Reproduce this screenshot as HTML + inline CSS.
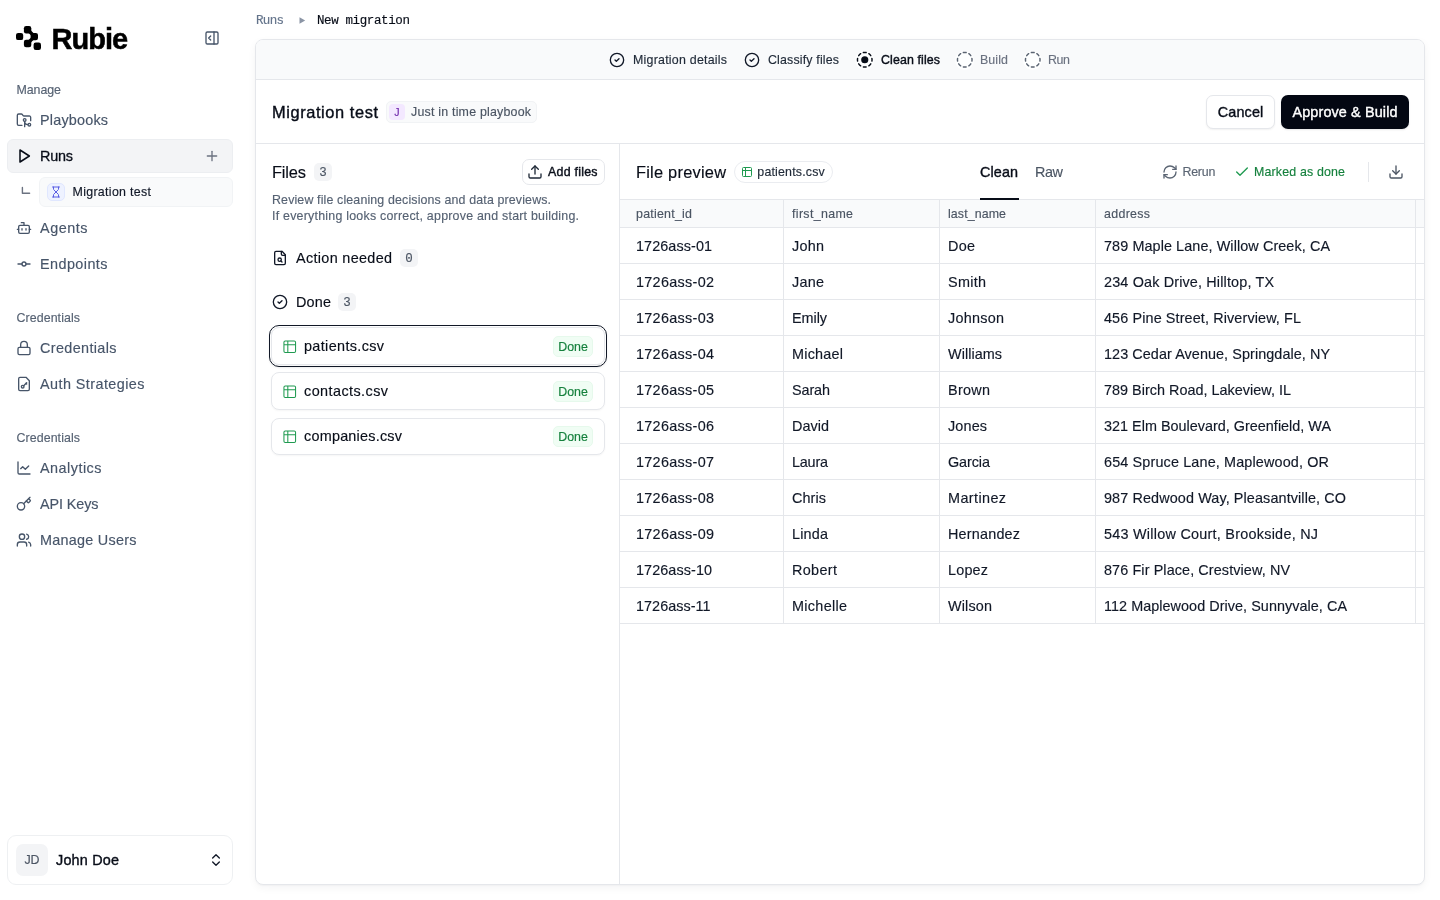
<!DOCTYPE html><html lang="en"><head><meta charset="utf-8"><title>Rubie - New migration</title><style>
*{margin:0;padding:0;box-sizing:border-box}
html,body{width:1440px;height:900px;overflow:hidden;background:#fff}
body{font-family:"Liberation Sans",sans-serif;position:relative}
.t{position:absolute;white-space:nowrap;display:block;font-weight:400;text-decoration:none}
.i{position:absolute;display:block;overflow:visible}
aside,main,section,header,nav,table{position:absolute}
aside,nav,main{will-change:transform}
</style></head><body><aside style="left:0;top:0;width:240px;height:900px"><svg class="i" style="left:14px;top:24px" width="30" height="28" viewBox="14 24 30 28" fill="#000">
<rect x="23.9" y="26" width="7.4" height="7.4" rx="2.2"/><rect x="16" y="32.9" width="7.2" height="7.2" rx="2.2"/>
<rect x="30.6" y="32.9" width="7.4" height="7.4" rx="2.2"/><rect x="23.9" y="39.8" width="7.4" height="7.4" rx="2.2"/>
<rect x="33.6" y="42.6" width="7.4" height="7.4" rx="2.2"/>
<path d="M29.5 31.5l3 3M29.5 41.5l3-3" stroke="#000" stroke-width="3.4" stroke-linecap="round"/></svg><span class="t" id="t0" style="left:51.5px;top:21px;font-size:29px;line-height:36px;color:#000;font-weight:700;-webkit-text-stroke:0.5px;letter-spacing:-0.991px;">Rubie</span><svg class="i" style="left:204px;top:30px;color:#475569;" width="16" height="16" viewBox="0 0 24 24" fill="none" stroke="currentColor" stroke-width="2" stroke-linecap="round" stroke-linejoin="round"><rect width="18" height="18" x="3" y="3" rx="2"/><path d="M15 3v18"/><path d="m10 15-3-3 3-3"/></svg><span class="t" id="t1" style="left:16.5px;top:80.5px;font-size:12.4px;line-height:19px;color:#566273;-webkit-text-stroke:0.15px;letter-spacing:-0.056px;">Manage</span><div style="position:absolute;left:7px;top:139px;width:226px;height:34px;box-sizing:border-box;background:#f3f4f6;border:1px solid #eceef1;border-radius:6px"></div><div style="position:absolute;left:39px;top:177px;width:194px;height:30px;box-sizing:border-box;background:#f9fafb;border:1px solid #f1f3f5;border-radius:6px"></div><svg class="i" style="left:16px;top:112px;color:#475569;" width="16" height="16" viewBox="0 0 24 24" fill="none" stroke="currentColor" stroke-width="2" stroke-linecap="round" stroke-linejoin="round"><path d="M9 20H4a2 2 0 0 1-2-2V5a2 2 0 0 1 2-2h3.9a2 2 0 0 1 1.69.9l.81 1.2a2 2 0 0 0 1.67.9H20a2 2 0 0 1 2 2v5"/><circle cx="13" cy="12" r="2"/><path d="M18 19c-2.8 0-5-2.2-5-5v8"/><circle cx="20" cy="19" r="2"/></svg><a class="t" id="t2" style="left:40px;top:109px;font-size:14.4px;line-height:22px;color:#475569;-webkit-text-stroke:0.15px;letter-spacing:0.199px;">Playbooks</a><svg class="i" style="left:16px;top:148px;color:#080d18;" width="16" height="16" viewBox="0 0 24 24" fill="none" stroke="currentColor" stroke-width="2.3" stroke-linecap="round" stroke-linejoin="round"><polygon points="6 3 20 12 6 21 6 3"/></svg><a class="t" id="t3" style="left:40px;top:145px;font-size:14.4px;line-height:22px;color:#080d18;-webkit-text-stroke:0.3px;letter-spacing:-0.203px;">Runs</a><svg class="i" style="left:16px;top:220px;color:#475569;" width="16" height="16" viewBox="0 0 24 24" fill="none" stroke="currentColor" stroke-width="2" stroke-linecap="round" stroke-linejoin="round"><path d="M12 8V4H8"/><rect width="16" height="12" x="4" y="8" rx="2"/><path d="M2 14h2"/><path d="M20 14h2"/><path d="M15 13v2"/><path d="M9 13v2"/></svg><a class="t" id="t4" style="left:40px;top:217px;font-size:14.4px;line-height:22px;color:#475569;-webkit-text-stroke:0.15px;letter-spacing:0.537px;">Agents</a><svg class="i" style="left:16px;top:256px;color:#475569;" width="16" height="16" viewBox="0 0 24 24" fill="none" stroke="currentColor" stroke-width="2" stroke-linecap="round" stroke-linejoin="round"><circle cx="12" cy="12" r="3"/><line x1="3" x2="9" y1="12" y2="12"/><line x1="15" x2="21" y1="12" y2="12"/></svg><a class="t" id="t5" style="left:40px;top:253px;font-size:14.4px;line-height:22px;color:#475569;-webkit-text-stroke:0.15px;letter-spacing:0.436px;">Endpoints</a><svg class="i" style="left:204px;top:148px;color:#6b7280;" width="16" height="16" viewBox="0 0 24 24" fill="none" stroke="currentColor" stroke-width="2" stroke-linecap="round" stroke-linejoin="round"><path d="M5 12h14"/><path d="M12 5v14"/></svg><svg class="i" style="left:20px;top:184px" width="12" height="12" viewBox="20 184 12 12" fill="none" stroke="#6b7280" stroke-width="1.4" stroke-linecap="round" stroke-linejoin="round"><path d="M22.4 187.4v5.9h7.2"/></svg><div style="position:absolute;left:47px;top:183px;width:18px;height:18px;box-sizing:border-box;background:#eef2ff;border:1px solid #e0e7ff;border-radius:5px"></div><svg class="i" style="left:50px;top:186px;color:#5b5fe3;" width="12" height="12" viewBox="0 0 24 24" fill="none" stroke="currentColor" stroke-width="2" stroke-linecap="round" stroke-linejoin="round"><path d="M5 22h14"/><path d="M5 2h14"/><path d="M17 22v-4.172a2 2 0 0 0-.586-1.414L12 12l-4.414 4.414A2 2 0 0 0 7 17.828V22"/><path d="M7 2v4.172a2 2 0 0 0 .586 1.414L12 12l4.414-4.414A2 2 0 0 0 17 6.172V2"/></svg><a class="t" id="t6" style="left:72.5px;top:182.5px;font-size:12.4px;line-height:19px;color:#111827;-webkit-text-stroke:0.15px;letter-spacing:0.317px;">Migration test</a><span class="t" id="t7" style="left:16.5px;top:308.5px;font-size:12.4px;line-height:19px;color:#566273;-webkit-text-stroke:0.15px;letter-spacing:0.081px;">Credentials</span><svg class="i" style="left:16px;top:340px;color:#475569;" width="16" height="16" viewBox="0 0 24 24" fill="none" stroke="currentColor" stroke-width="2" stroke-linecap="round" stroke-linejoin="round"><rect width="18" height="11" x="3" y="11" rx="2" ry="2"/><path d="M7 11V7a5 5 0 0 1 10 0v4"/></svg><a class="t" id="t8" style="left:40px;top:337px;font-size:14.4px;line-height:22px;color:#475569;-webkit-text-stroke:0.15px;letter-spacing:0.370px;">Credentials</a><svg class="i" style="left:16px;top:376px;color:#475569;" width="16" height="16" viewBox="0 0 24 24" fill="none" stroke="currentColor" stroke-width="2" stroke-linecap="round" stroke-linejoin="round"><path d="M15 2H6a2 2 0 0 0-2 2v16a2 2 0 0 0 2 2h12a2 2 0 0 0 2-2V7Z"/><circle cx="10" cy="16" r="2"/><path d="m16 10-4.5 4.5"/><path d="m15 11 1 1"/></svg><a class="t" id="t9" style="left:40px;top:373px;font-size:14.4px;line-height:22px;color:#475569;-webkit-text-stroke:0.15px;letter-spacing:0.435px;">Auth Strategies</a><span class="t" id="t10" style="left:16.5px;top:428.5px;font-size:12.4px;line-height:19px;color:#566273;-webkit-text-stroke:0.15px;letter-spacing:0.081px;">Credentials</span><svg class="i" style="left:16px;top:460px;color:#475569;" width="16" height="16" viewBox="0 0 24 24" fill="none" stroke="currentColor" stroke-width="2" stroke-linecap="round" stroke-linejoin="round"><path d="M3 3v16a2 2 0 0 0 2 2h16"/><path d="m19 9-5 5-4-4-3 3"/></svg><a class="t" id="t11" style="left:40px;top:457px;font-size:14.4px;line-height:22px;color:#475569;-webkit-text-stroke:0.15px;letter-spacing:0.488px;">Analytics</a><svg class="i" style="left:16px;top:496px;color:#475569;" width="16" height="16" viewBox="0 0 24 24" fill="none" stroke="currentColor" stroke-width="2" stroke-linecap="round" stroke-linejoin="round"><path d="m15.5 7.5 2.3 2.3a1 1 0 0 0 1.4 0l2.1-2.1a1 1 0 0 0 0-1.4L19 4"/><path d="m21 2-9.6 9.6"/><circle cx="7.5" cy="15.5" r="5.5"/></svg><a class="t" id="t12" style="left:40px;top:493px;font-size:14.4px;line-height:22px;color:#475569;-webkit-text-stroke:0.15px;letter-spacing:-0.098px;">API Keys</a><svg class="i" style="left:16px;top:532px;color:#475569;" width="16" height="16" viewBox="0 0 24 24" fill="none" stroke="currentColor" stroke-width="2" stroke-linecap="round" stroke-linejoin="round"><path d="M16 21v-2a4 4 0 0 0-4-4H6a4 4 0 0 0-4 4v2"/><circle cx="9" cy="7" r="4"/><path d="M22 21v-2a4 4 0 0 0-3-3.87"/><path d="M16 3.13a4 4 0 0 1 0 7.75"/></svg><a class="t" id="t13" style="left:40px;top:529px;font-size:14.4px;line-height:22px;color:#475569;-webkit-text-stroke:0.15px;letter-spacing:0.264px;">Manage Users</a><div style="position:absolute;left:7px;top:835px;width:226px;height:50px;box-sizing:border-box;background:#fff;border:1px solid #eef0f2;border-radius:9px"></div><div style="position:absolute;left:16px;top:844px;width:32px;height:32px;box-sizing:border-box;background:#f3f4f6;border-radius:7px"></div><span class="t" id="t14" style="left:24.5px;top:850.5px;font-size:12.4px;line-height:19px;color:#4b5563;-webkit-text-stroke:0.15px;letter-spacing:-0.156px;">JD</span><span class="t" id="t15" style="left:56px;top:849px;font-size:14.4px;line-height:22px;color:#080d18;-webkit-text-stroke:0.38px;letter-spacing:0.199px;">John Doe</span><svg class="i" style="left:208px;top:852px;color:#111827;" width="16" height="16" viewBox="0 0 24 24" fill="none" stroke="currentColor" stroke-width="2" stroke-linecap="round" stroke-linejoin="round"><path d="m7 15 5 5 5-5"/><path d="m7 9 5-5 5 5"/></svg></aside><nav style="left:0;top:0;width:1440px;height:39px"><a class="t" id="t16" style="left:256px;top:11.5px;font-size:12.5px;line-height:19px;color:#64748b;-webkit-text-stroke:0.15px;font-family:'Liberation Mono', monospace;letter-spacing:-0.672px;">Runs</a><svg class="i" style="left:298.5px;top:16.7px" width="7" height="7" viewBox="0 0 7 7"><path d="M0.5 0.3L6.2 3.5L0.5 6.7Z" fill="#8b95a5"/></svg><span class="t" id="t17" style="left:317px;top:11.5px;font-size:12.5px;line-height:19px;color:#080d18;-webkit-text-stroke:0.15px;font-family:'Liberation Mono', monospace;letter-spacing:-0.378px;">New migration</span></nav><main style="left:0;top:0"><div style="position:absolute;left:255px;top:39px;width:1170px;height:846px;box-sizing:border-box;background:#fff;border:1px solid #e5e7eb;border-radius:8px;box-shadow:0 3px 8px rgba(15,23,42,.045),0 1px 2px rgba(15,23,42,.04)"></div><div style="position:absolute;left:256px;top:40px;width:1168px;height:39px;box-sizing:border-box;background:#f9fafb;border-radius:7px 7px 0 0"></div><div style="position:absolute;left:256px;top:79px;width:1168px;height:1px;box-sizing:border-box;background:#e5e7eb"></div><svg class="i" style="left:609.4px;top:52px;color:#111827;" width="16" height="16" viewBox="0 0 24 24" fill="none" stroke="currentColor" stroke-width="2" stroke-linecap="round" stroke-linejoin="round"><circle cx="12" cy="12" r="10"/><path d="m9 12 2 2 4-4"/></svg><span class="t" id="t18" style="left:633px;top:50.5px;font-size:12.4px;line-height:19px;color:#1f2937;-webkit-text-stroke:0.15px;letter-spacing:0.235px;">Migration details</span><svg class="i" style="left:744.4px;top:52px;color:#111827;" width="16" height="16" viewBox="0 0 24 24" fill="none" stroke="currentColor" stroke-width="2" stroke-linecap="round" stroke-linejoin="round"><circle cx="12" cy="12" r="10"/><path d="m9 12 2 2 4-4"/></svg><span class="t" id="t19" style="left:768px;top:50.5px;font-size:12.4px;line-height:19px;color:#1f2937;-webkit-text-stroke:0.15px;letter-spacing:0.165px;">Classify files</span><div style="position:absolute;left:855.1px;top:50.5px;width:19px;height:19px;box-sizing:border-box;background:#fff;border-radius:50%;opacity:.85"></div><svg class="i" style="left:855.85px;top:51.25px;color:#080d18;" width="17.5" height="17.5" viewBox="0 0 24 24" fill="none" stroke="currentColor" stroke-width="2" stroke-linecap="round" stroke-linejoin="round"><path d="M10.1 2.18a9.93 9.93 0 0 1 3.8 0"/><path d="M17.6 3.71a9.95 9.95 0 0 1 2.69 2.7"/><path d="M21.82 10.1a9.93 9.93 0 0 1 0 3.8"/><path d="M20.29 17.6a9.95 9.95 0 0 1-2.7 2.69"/><path d="M13.9 21.82a9.94 9.94 0 0 1-3.8 0"/><path d="M6.4 20.29a9.95 9.95 0 0 1-2.69-2.7"/><path d="M2.18 13.9a9.93 9.93 0 0 1 0-3.8"/><path d="M3.71 6.4a9.95 9.95 0 0 1 2.7-2.69"/><circle cx="12" cy="12" r="4.9" fill="currentColor" stroke="none"/></svg><span class="t" id="t20" style="left:881px;top:50.5px;font-size:12.4px;line-height:19px;color:#080d18;-webkit-text-stroke:0.38px;letter-spacing:0.114px;">Clean files</span><div style="position:absolute;left:955.1px;top:50.5px;width:19px;height:19px;box-sizing:border-box;background:#fff;border-radius:50%;opacity:.85"></div><svg class="i" style="left:955.85px;top:51.25px;color:#5b6472;" width="17.5" height="17.5" viewBox="0 0 24 24" fill="none" stroke="currentColor" stroke-width="2" stroke-linecap="round" stroke-linejoin="round"><path d="M10.1 2.18a9.93 9.93 0 0 1 3.8 0"/><path d="M17.6 3.71a9.95 9.95 0 0 1 2.69 2.7"/><path d="M21.82 10.1a9.93 9.93 0 0 1 0 3.8"/><path d="M20.29 17.6a9.95 9.95 0 0 1-2.7 2.69"/><path d="M13.9 21.82a9.94 9.94 0 0 1-3.8 0"/><path d="M6.4 20.29a9.95 9.95 0 0 1-2.69-2.7"/><path d="M2.18 13.9a9.93 9.93 0 0 1 0-3.8"/><path d="M3.71 6.4a9.95 9.95 0 0 1 2.7-2.69"/></svg><span class="t" id="t21" style="left:980px;top:50.5px;font-size:12.4px;line-height:19px;color:#6b7280;-webkit-text-stroke:0.15px;letter-spacing:0.109px;">Build</span><div style="position:absolute;left:1023.1px;top:50.5px;width:19px;height:19px;box-sizing:border-box;background:#fff;border-radius:50%;opacity:.85"></div><svg class="i" style="left:1023.85px;top:51.25px;color:#5b6472;" width="17.5" height="17.5" viewBox="0 0 24 24" fill="none" stroke="currentColor" stroke-width="2" stroke-linecap="round" stroke-linejoin="round"><path d="M10.1 2.18a9.93 9.93 0 0 1 3.8 0"/><path d="M17.6 3.71a9.95 9.95 0 0 1 2.69 2.7"/><path d="M21.82 10.1a9.93 9.93 0 0 1 0 3.8"/><path d="M20.29 17.6a9.95 9.95 0 0 1-2.7 2.69"/><path d="M13.9 21.82a9.94 9.94 0 0 1-3.8 0"/><path d="M6.4 20.29a9.95 9.95 0 0 1-2.69-2.7"/><path d="M2.18 13.9a9.93 9.93 0 0 1 0-3.8"/><path d="M3.71 6.4a9.95 9.95 0 0 1 2.7-2.69"/></svg><span class="t" id="t22" style="left:1048px;top:50.5px;font-size:12.4px;line-height:19px;color:#6b7280;-webkit-text-stroke:0.15px;letter-spacing:-0.367px;">Run</span><h1 class="t" id="t23" style="left:272px;top:98px;font-size:16.4px;line-height:28px;color:#080d18;-webkit-text-stroke:0.38px;letter-spacing:0.585px;">Migration test</h1><div style="position:absolute;left:386px;top:101px;width:151px;height:22px;box-sizing:border-box;background:#f9fafb;border:1px solid #f1f3f5;border-radius:5px"></div><div style="position:absolute;left:389px;top:104px;width:16px;height:16px;box-sizing:border-box;background:#f3e8ff;border-radius:4px"></div><span class="t" id="t24" style="left:394.3px;top:104px;font-size:10.5px;line-height:16px;color:#6b21a8;-webkit-text-stroke:0.15px;">J</span><span class="t" id="t25" style="left:411px;top:102.5px;font-size:12.4px;line-height:19px;color:#4b5563;-webkit-text-stroke:0.15px;letter-spacing:0.215px;">Just in time playbook</span><div style="position:absolute;left:1206px;top:95px;width:69px;height:34px;box-sizing:border-box;background:#fff;border:1px solid #e5e7eb;border-radius:7px;box-shadow:0 1px 2px rgba(0,0,0,.06)"></div><span class="t" id="t26" style="left:1217.8px;top:100.8px;font-size:14.4px;line-height:22px;color:#080d18;-webkit-text-stroke:0.38px;letter-spacing:0.141px;">Cancel</span><div style="position:absolute;left:1281px;top:95px;width:128px;height:34px;box-sizing:border-box;background:#030712;border-radius:7px;box-shadow:0 1px 2px rgba(0,0,0,.1)"></div><span class="t" id="t27" style="left:1292.5px;top:100.8px;font-size:14.4px;line-height:22px;color:#fff;-webkit-text-stroke:0.38px;letter-spacing:0.128px;">Approve &amp; Build</span><div style="position:absolute;left:256px;top:143px;width:1168px;height:1px;box-sizing:border-box;background:#e5e7eb"></div><section style="left:0;top:0"><h2 class="t" id="t28" style="left:272px;top:158px;font-size:16.4px;line-height:28px;color:#080d18;-webkit-text-stroke:0.15px;letter-spacing:-0.152px;">Files</h2><div style="position:absolute;left:314px;top:163px;width:18px;height:18px;box-sizing:border-box;background:#f3f4f6;border-radius:5px"></div><span class="t" id="t29" style="left:319.3px;top:163.5px;font-size:12.5px;line-height:19px;color:#4b5563;-webkit-text-stroke:0.15px;font-family:'Liberation Mono', monospace;">3</span><div style="position:absolute;left:522px;top:159px;width:83px;height:26px;box-sizing:border-box;background:#fff;border:1px solid #e5e7eb;border-radius:7px"></div><svg class="i" style="left:526.7px;top:164px;color:#1f2937;" width="16" height="16" viewBox="0 0 24 24" fill="none" stroke="currentColor" stroke-width="2" stroke-linecap="round" stroke-linejoin="round"><path d="M21 15v4a2 2 0 0 1-2 2H5a2 2 0 0 1-2-2v-4"/><polyline points="17 8 12 3 7 8"/><line x1="12" x2="12" y1="3" y2="15"/></svg><span class="t" id="t30" style="left:548px;top:163px;font-size:12.4px;line-height:19px;color:#080d18;-webkit-text-stroke:0.38px;letter-spacing:0.246px;">Add files</span><p class="t" id="t31" style="left:272px;top:190.5px;font-size:12.4px;line-height:19px;color:#566273;-webkit-text-stroke:0.15px;letter-spacing:0.145px;">Review file cleaning decisions and data previews.</p><p class="t" id="t32" style="left:272px;top:206.5px;font-size:12.4px;line-height:19px;color:#566273;-webkit-text-stroke:0.15px;letter-spacing:0.235px;">If everything looks correct, approve and start building.</p><svg class="i" style="left:272px;top:250px;color:#111827;" width="16" height="16" viewBox="0 0 24 24" fill="none" stroke="currentColor" stroke-width="2" stroke-linecap="round" stroke-linejoin="round"><path d="M15 2H6a2 2 0 0 0-2 2v16a2 2 0 0 0 2 2h12a2 2 0 0 0 2-2V7Z"/><path d="M14 2v4a2 2 0 0 0 2 2h4"/><circle cx="11.5" cy="14.5" r="2.5"/><path d="M13.3 16.3 15 18"/></svg><span class="t" id="t33" style="left:296px;top:247px;font-size:14.4px;line-height:22px;color:#080d18;-webkit-text-stroke:0.15px;letter-spacing:0.332px;">Action needed</span><div style="position:absolute;left:400px;top:249px;width:18px;height:18px;box-sizing:border-box;background:#f3f4f6;border-radius:5px"></div><span class="t" id="t34" style="left:405.3px;top:249.5px;font-size:12.5px;line-height:19px;color:#4b5563;-webkit-text-stroke:0.15px;font-family:'Liberation Mono', monospace;">0</span><svg class="i" style="left:272px;top:294px;color:#111827;" width="16" height="16" viewBox="0 0 24 24" fill="none" stroke="currentColor" stroke-width="2" stroke-linecap="round" stroke-linejoin="round"><circle cx="12" cy="12" r="10"/><path d="m9 12 2 2 4-4"/></svg><span class="t" id="t35" style="left:296px;top:291px;font-size:14.4px;line-height:22px;color:#080d18;-webkit-text-stroke:0.15px;letter-spacing:0.198px;">Done</span><div style="position:absolute;left:338px;top:293px;width:18px;height:18px;box-sizing:border-box;background:#f3f4f6;border-radius:5px"></div><span class="t" id="t36" style="left:343.3px;top:293.5px;font-size:12.5px;line-height:19px;color:#4b5563;-webkit-text-stroke:0.15px;font-family:'Liberation Mono', monospace;">3</span><div style="position:absolute;left:269px;top:325px;width:338px;height:42.4px;box-sizing:border-box;border:1.5px solid #111827;border-radius:10px;background:#fff;box-shadow:0 1px 2px rgba(0,0,0,.08)"></div><div style="position:absolute;left:271px;top:327.4px;width:334px;height:37.2px;box-sizing:border-box;background:#fff;border:1px solid #e5e7eb;border-radius:8px;box-shadow:0 1px 2px rgba(0,0,0,.04)"></div><svg class="i" style="left:282.25px;top:338.55px;color:#1f9a50;" width="15.5" height="15.5" viewBox="0 0 24 24" fill="none" stroke="currentColor" stroke-width="1.6" stroke-linecap="round" stroke-linejoin="round"><path d="M9 3H5a2 2 0 0 0-2 2v4m6-6h10a2 2 0 0 1 2 2v4M9 3v18m0 0h10a2 2 0 0 0 2-2V9M9 21H5a2 2 0 0 1-2-2V9m0 0h18"/></svg><span class="t" id="t37" style="left:304px;top:335px;font-size:14.4px;line-height:22px;color:#080d18;-webkit-text-stroke:0.15px;letter-spacing:0.364px;">patients.csv</span><div style="position:absolute;left:553px;top:335.5px;width:40px;height:21px;box-sizing:border-box;background:#f0fdf4;border:1px solid #e6f9ec;border-radius:5px"></div><span class="t" id="t38" style="left:558.3px;top:337.8px;font-size:12.4px;line-height:19px;color:#15803d;-webkit-text-stroke:0.15px;letter-spacing:-0.042px;">Done</span><div style="position:absolute;left:271px;top:372.4px;width:334px;height:37.2px;box-sizing:border-box;background:#fff;border:1px solid #e5e7eb;border-radius:8px;box-shadow:0 1px 2px rgba(0,0,0,.04)"></div><svg class="i" style="left:282.25px;top:383.55px;color:#1f9a50;" width="15.5" height="15.5" viewBox="0 0 24 24" fill="none" stroke="currentColor" stroke-width="1.6" stroke-linecap="round" stroke-linejoin="round"><path d="M9 3H5a2 2 0 0 0-2 2v4m6-6h10a2 2 0 0 1 2 2v4M9 3v18m0 0h10a2 2 0 0 0 2-2V9M9 21H5a2 2 0 0 1-2-2V9m0 0h18"/></svg><span class="t" id="t39" style="left:304px;top:380px;font-size:14.4px;line-height:22px;color:#080d18;-webkit-text-stroke:0.15px;letter-spacing:0.438px;">contacts.csv</span><div style="position:absolute;left:553px;top:380.5px;width:40px;height:21px;box-sizing:border-box;background:#f0fdf4;border:1px solid #e6f9ec;border-radius:5px"></div><span class="t" id="t40" style="left:558.3px;top:382.8px;font-size:12.4px;line-height:19px;color:#15803d;-webkit-text-stroke:0.15px;letter-spacing:-0.042px;">Done</span><div style="position:absolute;left:271px;top:417.6px;width:334px;height:37.2px;box-sizing:border-box;background:#fff;border:1px solid #e5e7eb;border-radius:8px;box-shadow:0 1px 2px rgba(0,0,0,.04)"></div><svg class="i" style="left:282.25px;top:428.75px;color:#1f9a50;" width="15.5" height="15.5" viewBox="0 0 24 24" fill="none" stroke="currentColor" stroke-width="1.6" stroke-linecap="round" stroke-linejoin="round"><path d="M9 3H5a2 2 0 0 0-2 2v4m6-6h10a2 2 0 0 1 2 2v4M9 3v18m0 0h10a2 2 0 0 0 2-2V9M9 21H5a2 2 0 0 1-2-2V9m0 0h18"/></svg><span class="t" id="t41" style="left:304px;top:425.2px;font-size:14.4px;line-height:22px;color:#080d18;-webkit-text-stroke:0.15px;letter-spacing:0.234px;">companies.csv</span><div style="position:absolute;left:553px;top:425.7px;width:40px;height:21px;box-sizing:border-box;background:#f0fdf4;border:1px solid #e6f9ec;border-radius:5px"></div><span class="t" id="t42" style="left:558.3px;top:428px;font-size:12.4px;line-height:19px;color:#15803d;-webkit-text-stroke:0.15px;letter-spacing:-0.042px;">Done</span><div style="position:absolute;left:619px;top:144px;width:1px;height:740px;box-sizing:border-box;background:#e5e7eb"></div></section><section style="left:0;top:0"><h2 class="t" id="t43" style="left:636px;top:158px;font-size:16.4px;line-height:28px;color:#080d18;-webkit-text-stroke:0.15px;letter-spacing:0.232px;">File preview</h2><div style="position:absolute;left:734px;top:161px;width:99px;height:22px;box-sizing:border-box;background:#fff;border:1px solid #eaecf0;border-radius:11px"></div><svg class="i" style="left:741px;top:166px;color:#1f9a50;" width="12" height="12" viewBox="0 0 24 24" fill="none" stroke="currentColor" stroke-width="2" stroke-linecap="round" stroke-linejoin="round"><path d="M9 3H5a2 2 0 0 0-2 2v4m6-6h10a2 2 0 0 1 2 2v4M9 3v18m0 0h10a2 2 0 0 0 2-2V9M9 21H5a2 2 0 0 1-2-2V9m0 0h18"/></svg><span class="t" id="t44" style="left:757.3px;top:162.5px;font-size:12.4px;line-height:19px;color:#1f2937;-webkit-text-stroke:0.15px;letter-spacing:0.188px;">patients.csv</span><span class="t" id="t45" style="left:980px;top:161px;font-size:14.4px;line-height:22px;color:#080d18;-webkit-text-stroke:0.38px;letter-spacing:0.098px;">Clean</span><span class="t" id="t46" style="left:1035px;top:161px;font-size:14.4px;line-height:22px;color:#4b5563;-webkit-text-stroke:0.15px;letter-spacing:-0.398px;">Raw</span><svg class="i" style="left:1162px;top:164px;color:#5b6573;" width="16" height="16" viewBox="0 0 24 24" fill="none" stroke="currentColor" stroke-width="2" stroke-linecap="round" stroke-linejoin="round"><path d="M3 12a9 9 0 0 1 9-9 9.75 9.75 0 0 1 6.74 2.74L21 8"/><path d="M21 3v5h-5"/><path d="M21 12a9 9 0 0 1-9 9 9.75 9.75 0 0 1-6.74-2.74L3 16"/><path d="M8 16H3v5"/></svg><span class="t" id="t47" style="left:1182.4px;top:162.5px;font-size:12.4px;line-height:19px;color:#5b6573;-webkit-text-stroke:0.15px;letter-spacing:-0.188px;">Rerun</span><svg class="i" style="left:1234px;top:164px;color:#1f9a50;" width="16" height="16" viewBox="0 0 24 24" fill="none" stroke="currentColor" stroke-width="2" stroke-linecap="round" stroke-linejoin="round"><path d="M20 6 9 17l-5-5"/></svg><span class="t" id="t48" style="left:1254px;top:162.5px;font-size:12.4px;line-height:19px;color:#15803d;-webkit-text-stroke:0.15px;letter-spacing:0.165px;">Marked as done</span><div style="position:absolute;left:1368px;top:162px;width:1px;height:20px;box-sizing:border-box;background:#e5e7eb"></div><svg class="i" style="left:1388px;top:164px;color:#4b5563;" width="16" height="16" viewBox="0 0 24 24" fill="none" stroke="currentColor" stroke-width="2" stroke-linecap="round" stroke-linejoin="round"><path d="M21 15v4a2 2 0 0 1-2 2H5a2 2 0 0 1-2-2v-4"/><polyline points="7 10 12 15 17 10"/><line x1="12" x2="12" y1="15" y2="3"/></svg><div><div style="position:absolute;left:620px;top:199px;width:804px;height:1px;box-sizing:border-box;background:#e5e7eb"></div><div style="position:absolute;left:620px;top:200px;width:804px;height:27px;box-sizing:border-box;background:#f9fafb"></div><div class="t" id="t49" style="left:636px;top:205px;font-size:12.4px;line-height:19px;color:#4b5563;-webkit-text-stroke:0.15px;letter-spacing:0.250px;">patient_id</div><div class="t" id="t50" style="left:792px;top:205px;font-size:12.4px;line-height:19px;color:#4b5563;-webkit-text-stroke:0.15px;letter-spacing:0.349px;">first_name</div><div class="t" id="t51" style="left:948px;top:205px;font-size:12.4px;line-height:19px;color:#4b5563;-webkit-text-stroke:0.15px;letter-spacing:0.104px;">last_name</div><div class="t" id="t52" style="left:1104px;top:205px;font-size:12.4px;line-height:19px;color:#4b5563;-webkit-text-stroke:0.15px;letter-spacing:0.318px;">address</div><div style="position:absolute;left:620px;top:227px;width:804px;height:1px;box-sizing:border-box;background:#e5e7eb"></div><div class="t" id="t53" style="left:636px;top:234.5px;font-size:14.4px;line-height:22px;color:#111827;-webkit-text-stroke:0.15px;letter-spacing:0.087px;">1726ass-01</div><div class="t" id="t54" style="left:792px;top:234.5px;font-size:14.4px;line-height:22px;color:#111827;-webkit-text-stroke:0.15px;letter-spacing:0.260px;">John</div><div class="t" id="t55" style="left:948px;top:234.5px;font-size:14.4px;line-height:22px;color:#111827;-webkit-text-stroke:0.15px;letter-spacing:0.297px;">Doe</div><div class="t" id="t56" style="left:1104px;top:234.5px;font-size:14.4px;line-height:22px;color:#111827;-webkit-text-stroke:0.15px;letter-spacing:0.092px;">789 Maple Lane, Willow Creek, CA</div><div style="position:absolute;left:620px;top:263px;width:804px;height:1px;box-sizing:border-box;background:#e5e7eb"></div><div class="t" id="t57" style="left:636px;top:270.5px;font-size:14.4px;line-height:22px;color:#111827;-webkit-text-stroke:0.15px;letter-spacing:0.309px;">1726ass-02</div><div class="t" id="t58" style="left:792px;top:270.5px;font-size:14.4px;line-height:22px;color:#111827;-webkit-text-stroke:0.15px;letter-spacing:0.260px;">Jane</div><div class="t" id="t59" style="left:948px;top:270.5px;font-size:14.4px;line-height:22px;color:#111827;-webkit-text-stroke:0.15px;letter-spacing:0.301px;">Smith</div><div class="t" id="t60" style="left:1104px;top:270.5px;font-size:14.4px;line-height:22px;color:#111827;-webkit-text-stroke:0.15px;letter-spacing:0.156px;">234 Oak Drive, Hilltop, TX</div><div style="position:absolute;left:620px;top:299px;width:804px;height:1px;box-sizing:border-box;background:#e5e7eb"></div><div class="t" id="t61" style="left:636px;top:306.5px;font-size:14.4px;line-height:22px;color:#111827;-webkit-text-stroke:0.15px;letter-spacing:0.309px;">1726ass-03</div><div class="t" id="t62" style="left:792px;top:306.5px;font-size:14.4px;line-height:22px;color:#111827;-webkit-text-stroke:0.15px;letter-spacing:-0.047px;">Emily</div><div class="t" id="t63" style="left:948px;top:306.5px;font-size:14.4px;line-height:22px;color:#111827;-webkit-text-stroke:0.15px;letter-spacing:0.263px;">Johnson</div><div class="t" id="t64" style="left:1104px;top:306.5px;font-size:14.4px;line-height:22px;color:#111827;-webkit-text-stroke:0.15px;letter-spacing:0.118px;">456 Pine Street, Riverview, FL</div><div style="position:absolute;left:620px;top:335px;width:804px;height:1px;box-sizing:border-box;background:#e5e7eb"></div><div class="t" id="t65" style="left:636px;top:342.5px;font-size:14.4px;line-height:22px;color:#111827;-webkit-text-stroke:0.15px;letter-spacing:0.309px;">1726ass-04</div><div class="t" id="t66" style="left:792px;top:342.5px;font-size:14.4px;line-height:22px;color:#111827;-webkit-text-stroke:0.15px;letter-spacing:0.234px;">Michael</div><div class="t" id="t67" style="left:948px;top:342.5px;font-size:14.4px;line-height:22px;color:#111827;-webkit-text-stroke:0.15px;letter-spacing:0.062px;">Williams</div><div class="t" id="t68" style="left:1104px;top:342.5px;font-size:14.4px;line-height:22px;color:#111827;-webkit-text-stroke:0.15px;letter-spacing:0.073px;">123 Cedar Avenue, Springdale, NY</div><div style="position:absolute;left:620px;top:371px;width:804px;height:1px;box-sizing:border-box;background:#e5e7eb"></div><div class="t" id="t69" style="left:636px;top:378.5px;font-size:14.4px;line-height:22px;color:#111827;-webkit-text-stroke:0.15px;letter-spacing:0.309px;">1726ass-05</div><div class="t" id="t70" style="left:792px;top:378.5px;font-size:14.4px;line-height:22px;color:#111827;-webkit-text-stroke:0.15px;letter-spacing:-0.102px;">Sarah</div><div class="t" id="t71" style="left:948px;top:378.5px;font-size:14.4px;line-height:22px;color:#111827;-webkit-text-stroke:0.15px;letter-spacing:0.301px;">Brown</div><div class="t" id="t72" style="left:1104px;top:378.5px;font-size:14.4px;line-height:22px;color:#111827;-webkit-text-stroke:0.15px;letter-spacing:0.023px;">789 Birch Road, Lakeview, IL</div><div style="position:absolute;left:620px;top:407px;width:804px;height:1px;box-sizing:border-box;background:#e5e7eb"></div><div class="t" id="t73" style="left:636px;top:414.5px;font-size:14.4px;line-height:22px;color:#111827;-webkit-text-stroke:0.15px;letter-spacing:0.309px;">1726ass-06</div><div class="t" id="t74" style="left:792px;top:414.5px;font-size:14.4px;line-height:22px;color:#111827;-webkit-text-stroke:0.15px;letter-spacing:0.051px;">David</div><div class="t" id="t75" style="left:948px;top:414.5px;font-size:14.4px;line-height:22px;color:#111827;-webkit-text-stroke:0.15px;letter-spacing:0.148px;">Jones</div><div class="t" id="t76" style="left:1104px;top:414.5px;font-size:14.4px;line-height:22px;color:#111827;-webkit-text-stroke:0.15px;letter-spacing:0.012px;">321 Elm Boulevard, Greenfield, WA</div><div style="position:absolute;left:620px;top:443px;width:804px;height:1px;box-sizing:border-box;background:#e5e7eb"></div><div class="t" id="t77" style="left:636px;top:450.5px;font-size:14.4px;line-height:22px;color:#111827;-webkit-text-stroke:0.15px;letter-spacing:0.309px;">1726ass-07</div><div class="t" id="t78" style="left:792px;top:450.5px;font-size:14.4px;line-height:22px;color:#111827;-webkit-text-stroke:0.15px;letter-spacing:-0.203px;">Laura</div><div class="t" id="t79" style="left:948px;top:450.5px;font-size:14.4px;line-height:22px;color:#111827;-webkit-text-stroke:0.15px;letter-spacing:-0.078px;">Garcia</div><div class="t" id="t80" style="left:1104px;top:450.5px;font-size:14.4px;line-height:22px;color:#111827;-webkit-text-stroke:0.15px;letter-spacing:0.145px;">654 Spruce Lane, Maplewood, OR</div><div style="position:absolute;left:620px;top:479px;width:804px;height:1px;box-sizing:border-box;background:#e5e7eb"></div><div class="t" id="t81" style="left:636px;top:486.5px;font-size:14.4px;line-height:22px;color:#111827;-webkit-text-stroke:0.15px;letter-spacing:0.309px;">1726ass-08</div><div class="t" id="t82" style="left:792px;top:486.5px;font-size:14.4px;line-height:22px;color:#111827;-webkit-text-stroke:0.15px;letter-spacing:0.102px;">Chris</div><div class="t" id="t83" style="left:948px;top:486.5px;font-size:14.4px;line-height:22px;color:#111827;-webkit-text-stroke:0.15px;letter-spacing:0.402px;">Martinez</div><div class="t" id="t84" style="left:1104px;top:486.5px;font-size:14.4px;line-height:22px;color:#111827;-webkit-text-stroke:0.15px;letter-spacing:0.110px;">987 Redwood Way, Pleasantville, CO</div><div style="position:absolute;left:620px;top:515px;width:804px;height:1px;box-sizing:border-box;background:#e5e7eb"></div><div class="t" id="t85" style="left:636px;top:522.5px;font-size:14.4px;line-height:22px;color:#111827;-webkit-text-stroke:0.15px;letter-spacing:0.309px;">1726ass-09</div><div class="t" id="t86" style="left:792px;top:522.5px;font-size:14.4px;line-height:22px;color:#111827;-webkit-text-stroke:0.15px;letter-spacing:0.195px;">Linda</div><div class="t" id="t87" style="left:948px;top:522.5px;font-size:14.4px;line-height:22px;color:#111827;-webkit-text-stroke:0.15px;letter-spacing:0.199px;">Hernandez</div><div class="t" id="t88" style="left:1104px;top:522.5px;font-size:14.4px;line-height:22px;color:#111827;-webkit-text-stroke:0.15px;letter-spacing:0.255px;">543 Willow Court, Brookside, NJ</div><div style="position:absolute;left:620px;top:551px;width:804px;height:1px;box-sizing:border-box;background:#e5e7eb"></div><div class="t" id="t89" style="left:636px;top:558.5px;font-size:14.4px;line-height:22px;color:#111827;-webkit-text-stroke:0.15px;letter-spacing:0.087px;">1726ass-10</div><div class="t" id="t90" style="left:792px;top:558.5px;font-size:14.4px;line-height:22px;color:#111827;-webkit-text-stroke:0.15px;letter-spacing:0.359px;">Robert</div><div class="t" id="t91" style="left:948px;top:558.5px;font-size:14.4px;line-height:22px;color:#111827;-webkit-text-stroke:0.15px;letter-spacing:0.195px;">Lopez</div><div class="t" id="t92" style="left:1104px;top:558.5px;font-size:14.4px;line-height:22px;color:#111827;-webkit-text-stroke:0.15px;letter-spacing:0.105px;">876 Fir Place, Crestview, NV</div><div style="position:absolute;left:620px;top:587px;width:804px;height:1px;box-sizing:border-box;background:#e5e7eb"></div><div class="t" id="t93" style="left:636px;top:594.5px;font-size:14.4px;line-height:22px;color:#111827;-webkit-text-stroke:0.15px;letter-spacing:0.040px;">1726ass-11</div><div class="t" id="t94" style="left:792px;top:594.5px;font-size:14.4px;line-height:22px;color:#111827;-webkit-text-stroke:0.15px;letter-spacing:0.315px;">Michelle</div><div class="t" id="t95" style="left:948px;top:594.5px;font-size:14.4px;line-height:22px;color:#111827;-webkit-text-stroke:0.15px;letter-spacing:0.163px;">Wilson</div><div class="t" id="t96" style="left:1104px;top:594.5px;font-size:14.4px;line-height:22px;color:#111827;-webkit-text-stroke:0.15px;letter-spacing:0.051px;">112 Maplewood Drive, Sunnyvale, CA</div><div style="position:absolute;left:620px;top:623px;width:804px;height:1px;box-sizing:border-box;background:#e5e7eb"></div><div style="position:absolute;left:783px;top:200px;width:1px;height:424px;box-sizing:border-box;background:#e5e7eb"></div><div style="position:absolute;left:939px;top:200px;width:1px;height:424px;box-sizing:border-box;background:#e5e7eb"></div><div style="position:absolute;left:1095px;top:200px;width:1px;height:424px;box-sizing:border-box;background:#e5e7eb"></div><div style="position:absolute;left:1415px;top:200px;width:1px;height:424px;box-sizing:border-box;background:#e5e7eb"></div></div><div style="position:absolute;left:980px;top:198px;width:39px;height:2px;box-sizing:border-box;background:#080d18"></div></section></main></body></html>
